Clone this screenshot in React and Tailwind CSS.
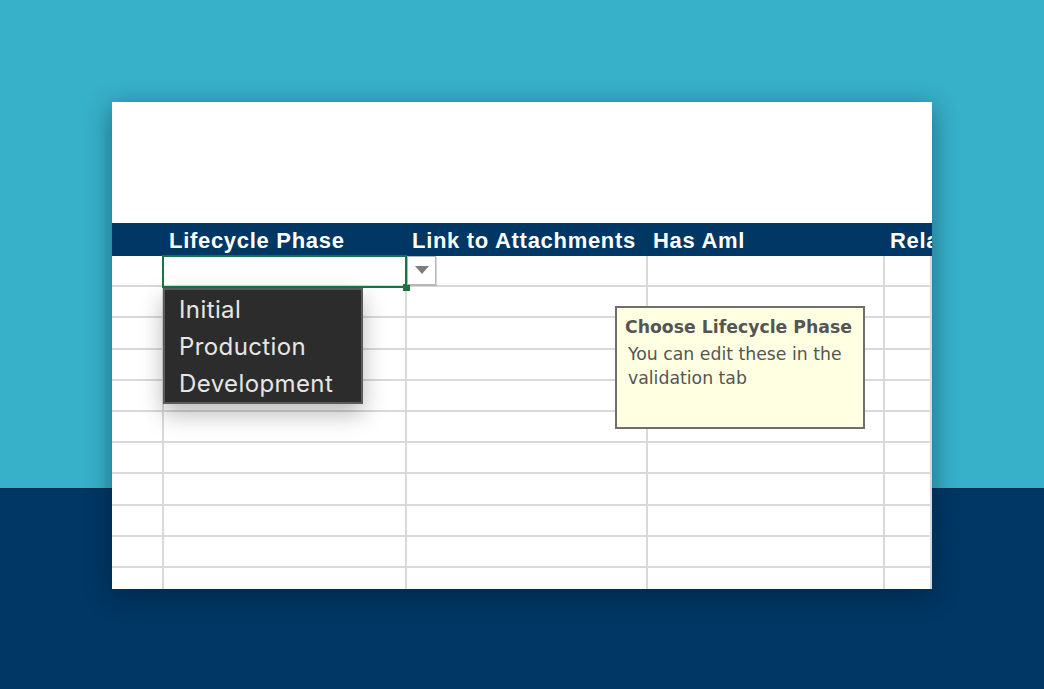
import React from 'react';

const headers = ['', 'Lifecycle Phase', 'Link to Attachments', 'Has Aml', 'Relationship'];
const rows = Array.from({ length: 11 });

export default function App() {
  return (
    <div className="h-[689px] w-[1044px] overflow-hidden bg-[linear-gradient(to_bottom,#37b0c9_0,#37b0c9_488px,#0b2d4d_488px,#0b2d4d_489px,#003764_489px)] pl-[112px] pt-[102px]">
      <div className="relative h-[487px] w-[820px] overflow-hidden bg-white shadow-[0_6px_24px_rgba(0,20,40,0.45)]">
        <div className="h-[121px]" />

        {/* header bar */}
        <div className="grid h-[33px] grid-cols-[52px_243px_241px_237px_1fr] bg-[#003764] font-['Liberation_Sans',Arial,sans-serif] text-[22px] font-bold tracking-[0.7px] text-white">
          {headers.map((h, i) => (
            <div key={i} className="flex items-center overflow-hidden whitespace-nowrap pl-[5px] pt-[2px]">
              {h}
            </div>
          ))}
        </div>

        {/* cells */}
        <div className="grid grid-cols-[52px_243px_241px_237px_1fr]">
          {rows.map((_, r) =>
            headers.map((_, c) => (
              <div
                key={`${r}-${c}`}
                className="h-[31.2px] border-b-2 border-r-2 border-[#d9d9d9]"
              />
            ))
          )}
        </div>

        {/* selected cell */}
        <div className="absolute left-[50px] top-[153px] h-[33px] w-[245px] border-2 border-[#1e7145]" />
        <div className="absolute left-[291px] top-[182px] h-[7px] w-[7px] bg-[#1e7145]" />

        {/* dropdown arrow button */}
        <div className="absolute left-[295px] top-[154px] flex h-[29px] w-[29px] items-center justify-center border border-[#b5b5b5] bg-white shadow-[1px_1px_1px_rgba(0,0,0,0.15)]">
          <svg width="14" height="9" viewBox="0 0 14 9">
            <polygon points="0,0 14,0 7,8" fill="#7d7d7d" />
          </svg>
        </div>

        {/* dropdown list */}
        <div className="absolute left-[51px] top-[186px] flex h-[116px] w-[200px] flex-col border-2 border-[#5a5a5a] bg-[#2c2c2c] pl-[14px] pt-[1px] font-['Inter',sans-serif] text-[24px] leading-[37px] tracking-[0.4px] text-[#e6e6e6] shadow-[0_10px_22px_rgba(0,0,0,0.28)]">
          <span>Initial</span>
          <span>Production</span>
          <span>Development</span>
        </div>

        {/* tooltip */}
        <div className="absolute left-[503px] top-[204px] h-[123px] w-[250px] border-2 border-[#6e6e6e] bg-[#ffffe1] px-[8px] pt-[8px] font-['DejaVu_Sans',Verdana,sans-serif] text-[#555555]">
          <div className="whitespace-nowrap text-[17.3px] font-bold leading-[22px]">Choose Lifecycle Phase</div>
          <div className="pl-[3px] pt-[4px] text-[17.3px] leading-[24px]">
            You can edit these in the
            <br />
            validation tab
          </div>
        </div>
      </div>
    </div>
  );
}
